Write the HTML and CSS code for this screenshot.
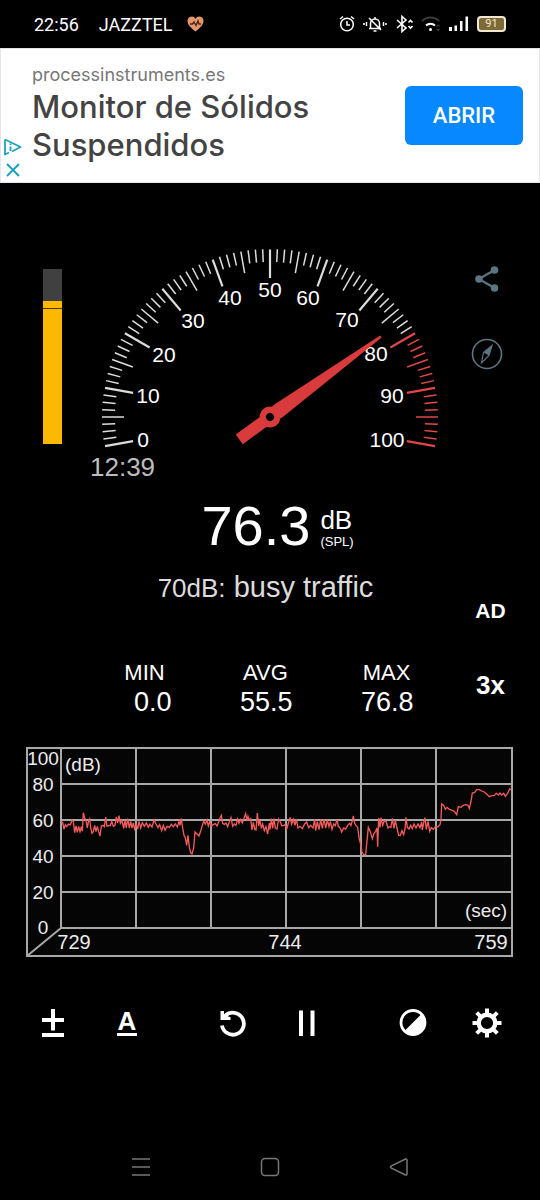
FILE: index.html
```html
<!DOCTYPE html>
<html lang="en">
<head>
  <meta charset="UTF-8">
  <meta name="viewport" content="width=device-width, initial-scale=1.0">
  <title>Sound Meter</title>
  <link rel="stylesheet" href="styles.css">
</head>
<body>
  <header class="status-bar">
    <span>22:56</span>
    <span class="carrier">JAZZTEL</span>
    <svg class="heart" width="17" height="16" viewBox="0 0 17 16">
      <path d="M8.5 15.5C4 12 .5 8.500.5 5A4.300 4.300 0 0 1 8.500 2.700 4.300 4.300 0 0 1 16.500 5C16.500 8.500 13 12 8.500 15.500Z" fill="#e2986c"/>
      <path d="M3 8h2.500l1.500-2 2 3.500 2-4.500 1 3h2" fill="none" stroke="#4a2412" stroke-width="1.400"/>
    </svg>
    <div class="status-icons">
      <!-- alarm -->
      <svg width="16" height="18" viewBox="0 0 16 18" fill="none" stroke="#fff" stroke-width="1.500">
        <circle cx="8" cy="9.500" r="6.300"/>
        <path d="M8 6v4h3M1 4l3-2.500M15 4l-3-2.500"/>
      </svg>
      <!-- muted bell -->
      <svg width="24" height="18" viewBox="0 0 24 18" fill="none" stroke="#fff" stroke-width="1.500">
        <path d="M6 13.500h12M7.500 13V8.500a4.500 4.500 0 0 1 9 0V13M12 2v2M10.500 16h3M6 3l12 12M3.500 7v4M1 8v2M20.500 7v4M23 8v2"/>
      </svg>
      <!-- bluetooth -->
      <svg width="18" height="18" viewBox="0 0 18 18" fill="none" stroke="#fff" stroke-width="1.600">
        <path d="M2 5l9 8-4 3.500v-15L11 5l-9 8"/>
        <path d="M13.500 7.500l2-2 2 2M13.500 11l2 2 2-2"/>
      </svg>
      <!-- wifi -->
      <svg width="20" height="18" viewBox="0 0 20 18" fill="none" stroke="#fff" stroke-width="2">
        <path d="M1 6a12 12 0 0 1 17 0" stroke="#3b3b3b"/>
        <path d="M5 10.500a7 7 0 0 1 9 0"/>
        <circle cx="9.500" cy="14.500" r="1.500" fill="#fff" stroke="none"/>
        <path d="M15.500 11.500l1.500-1.500 1.500 1.500M15.500 14l1.500 1.500 1.500-1.500" stroke="#3b3b3b" stroke-width="1.200"/>
      </svg>
      <!-- signal -->
      <svg width="20" height="18" viewBox="0 0 20 18" fill="#fff">
        <path d="M0 12h3v4H0zM5.500 10.500h2.500V16H5.500zM11 6h2.500v10H11zM16.500 1.500h2.500V16h-2.500z"/>
      </svg>
      <span class="battery">91</span>
    </div>
  </header>

  <section class="ad">
    <div class="ad-marks">
      <a href="#" aria-label="AdChoices">
        <svg width="18" height="18" viewBox="0 0 18 18" fill="none" stroke="#1ba4bd" stroke-width="1.800">
          <path d="M1 1.500l15.500 7.500-8.500 4.500M1 1.500v15l4-2" stroke-linejoin="round"/>
          <path d="M6.500 5.500v1.500M6.500 8.500v4.500"/>
        </svg>
      </a>
      <button type="button" aria-label="Close ad">
        <svg width="18" height="16" viewBox="0 0 18 16" fill="none" stroke="#1ba4bd" stroke-width="2">
          <path d="M3 2l12 12M15 2L3 14"/>
        </svg>
      </button>
    </div>
    <div class="ad-text">
      <a class="ad-url" href="#">processinstruments.es</a>
      <h2>Monitor de Sólidos Suspendidos</h2>
    </div>
    <button type="button" class="ad-open">ABRIR</button>
  </section>

  <main>
    <section class="meter">
      <div class="level">
        <div class="level-fill"><div class="level-line"></div></div>
      </div>

      <div class="gauge">
        <svg viewBox="-180 -177 360 214">
          <defs>
            <!-- one block of ten units: major tick, then one every 2.5 degrees -->
            <g id="ticks" stroke="currentColor" stroke-width="1.500">
              <path id="major" d="M-167.500 0h28.500" stroke-width="2.200"/>
              <path d="M-168 0h13" transform="rotate(2.500)"/>
              <path d="M-168 0h13" transform="rotate(5)"/>
              <path d="M-168 0h13" transform="rotate(7.500)"/>
              <path d="M-168 0h22" transform="rotate(10)"/>
              <path d="M-168 0h13" transform="rotate(12.500)"/>
              <path d="M-168 0h13" transform="rotate(15)"/>
              <path d="M-168 0h13" transform="rotate(17.500)"/>
            </g>
          </defs>
          <g class="scale">
            <use href="#ticks" transform="rotate(-10)"/>
            <use href="#ticks" transform="rotate(10)"/>
            <use href="#ticks" transform="rotate(30)"/>
            <use href="#ticks" transform="rotate(50)"/>
            <use href="#ticks" transform="rotate(70)"/>
            <use href="#ticks" transform="rotate(90)"/>
            <use href="#ticks" transform="rotate(110)"/>
            <use href="#ticks" transform="rotate(130)"/>
          </g>
          <g class="scale-loud">
            <use href="#ticks" transform="rotate(150)"/>
            <use href="#ticks" transform="rotate(170)"/>
            <use href="#major" transform="rotate(190)" stroke="currentColor"/>
          </g>
          <g class="scale-labels">
            <text x="-127" y="30">0</text>
            <text x="-122" y="-14">10</text>
            <text x="-106" y="-55">20</text>
            <text x="-77" y="-89">30</text>
            <text x="-40" y="-112">40</text>
            <text x="0" y="-120">50</text>
            <text x="38" y="-112">60</text>
            <text x="77" y="-90">70</text>
            <text x="106" y="-56">80</text>
            <text x="122" y="-14">90</text>
            <text x="117" y="30">100</text>
          </g>
          <g transform="rotate(-36)" fill="#d93b3c">
            <path d="M-38-6H0L10-7.500 137-1.300V1.300L10 7.500 0 6H-38Z"/>
            <circle r="10.500"/>
            <circle r="4" fill="#000"/>
          </g>
        </svg>
        <time>12:39</time>
      </div>

      <div class="meter-actions">
        <button type="button" aria-label="Share">
          <svg width="32" height="32" viewBox="0 0 32 32" fill="#5c7581">
            <path d="M23.500 7L8 16l15.500 9" fill="none" stroke="#5c7581" stroke-width="2.200"/>
            <circle cx="8" cy="16" r="3.800"/>
            <circle cx="23.500" cy="7" r="3.800"/>
            <circle cx="23.500" cy="25" r="3.800"/>
          </svg>
        </button>
        <button type="button" aria-label="Calibrate">
          <svg width="32" height="32" viewBox="0 0 32 32" fill="none" stroke="#5c7581" stroke-width="1.600">
            <circle cx="16" cy="16" r="14.500"/>
            <path d="M21 7.500L12.500 14.500 10.500 25l7.500-7.500Z" stroke-width="1.200"/>
            <path d="M21 7.500L12.500 14.500 18 17.500Z" fill="#5c7581" stroke="none"/>
          </svg>
        </button>
      </div>
    </section>

    <section class="info">
      <div class="readings">
        <div class="current">
          <span class="current-value">76.3</span>
          <span class="unit">dB<small>(SPL)</small></span>
        </div>
        <p class="description"><span>70dB:</span> busy traffic</p>
        <dl class="stats">
          <div><dt>MIN</dt><dd>0.0</dd></div>
          <div><dt>AVG</dt><dd>55.5</dd></div>
          <div><dt>MAX</dt><dd>76.8</dd></div>
        </dl>
      </div>
      <div class="side-buttons">
        <button type="button" class="remove-ads">AD</button>
        <button type="button" class="speed">3x</button>
      </div>
    </section>

    <svg class="chart" viewBox="0 0 487 210">
      <g class="grid">
        <rect x="1" y="1" width="485" height="208"/>
        <path d="M35 1v180M110 1v180M185 1v180M260 1v180M335 1v180M410 1v180"/>
        <path d="M35 37h451M35 73h451M35 109h451M35 145h451M35 181h451M35 181L1 209"/>
      </g>
      <svg x="35" y="1" width="450" height="180" viewBox="0 0 1350 540">
        <polyline class="trace" points="0,223 5,223 9,243 13,230 17,236 22,229 28,230 33,217 37,220 41,254 45,234 49,253 53,235 57,251 61,236 64,250 67,194 71,210 75,217 79,240 82,222 86,213 89,240 93,256 97,251 101,232 105,251 109,235 113,251 117,264 121,234 126,232 130,236 134,207 138,235 144,232 148,233 152,220 157,235 162,232 166,207 170,225 174,203 178,226 183,218 188,241 192,217 196,240 200,212 205,240 209,220 213,240 217,225 221,243 226,230 230,243 234,220 239,240 244,224 250,235 256,225 262,238 267,229 273,237 279,216 285,228 291,239 296,230 302,248 307,232 312,247 318,235 325,238 331,229 337,236 343,228 349,237 354,220 357,232 361,212 365,240 369,262 373,270 377,292 381,262 385,298 389,314 393,318 398,300 402,252 408,258 414,264 420,246 424,232 428,220 433,228 438,216 442,234 446,222 451,234 457,230 463,227 468,234 473,222 477,210 481,202 485,226 490,229 495,225 500,236 505,221 510,209 515,235 520,228 525,232 530,213 534,226 539,214 544,225 549,211 554,197 558,218 561,205 565,216 569,212 573,246 577,223 581,243 585,246 589,195 593,234 597,216 601,241 605,228 610,248 615,236 620,258 625,225 627,245 631,212 635,241 639,212 643,240 648,243 653,213 658,222 663,234 668,232 672,230 677,243 682,226 687,208 692,229 697,214 702,232 706,213 711,240 717,235 724,242 731,228 737,222 743,239 749,232 756,240 761,213 764,248 769,221 774,245 779,215 784,241 789,213 794,240 799,216 804,236 808,221 813,244 818,228 823,233 828,215 832,235 838,241 842,252 848,240 854,243 860,232 866,226 870,232 874,218 877,204 881,226 885,233 890,237 894,268 898,285 903,312 908,320 914,320 918,278 922,238 928,251 934,272 939,256 944,250 948,240 950,296 953,210 957,238 960,209 965,232 970,218 976,222 981,240 985,236 990,238 994,211 999,241 1003,217 1008,240 1013,262 1018,262 1023,248 1028,260 1032,243 1035,208 1039,238 1044,243 1049,232 1054,242 1059,228 1065,240 1071,228 1077,239 1082,222 1084,246 1089,220 1092,209 1096,244 1101,220 1106,250 1111,239 1117,244 1123,236 1130,237 1137,230 1140,214 1142,168 1148,172 1153,184 1158,178 1165,184 1172,186 1180,190 1187,200 1192,176 1200,178 1207,172 1214,170 1221,172 1225,181 1230,160 1234,135 1241,133 1247,125 1255,125 1262,129 1270,132 1277,138 1285,146 1292,143 1299,143 1306,136 1312,141 1317,135 1322,141 1328,136 1333,145 1340,136 1346,123 1350,125"/>
      </svg>
      <g class="axis">
        <text x="17" y="18">100</text>
        <text x="17" y="44">80</text>
        <text x="17" y="80">60</text>
        <text x="17" y="116">40</text>
        <text x="17" y="152">20</text>
        <text x="17" y="187">0</text>
        <text x="57" y="24">(dB)</text>
        <text x="460" y="170">(sec)</text>
      </g>
      <g class="axis axis-time">
        <text x="48" y="202">729</text>
        <text x="259" y="202">744</text>
        <text x="465" y="202">759</text>
      </g>
    </svg>

    <div class="toolbar">
      <div class="tool-group">
        <button type="button" aria-label="Adjust level">
          <svg viewBox="0 0 48 48" stroke="#fff" stroke-width="4">
            <path d="M24 10v21.500M13 21h22M13 36h22"/>
          </svg>
        </button>
        <button type="button" aria-label="Weighting A">
          <svg viewBox="0 0 48 48" fill="#fff">
            <text class="tool-letter" x="24" y="31">A</text>
            <path d="M14 34h20v3H14z"/>
          </svg>
        </button>
      </div>
      <div class="tool-group">
        <button type="button" aria-label="Reset">
          <svg viewBox="0 0 48 48" fill="#fff">
            <path d="M13 26.500A11 11 0 1 0 16.500 16.500" fill="none" stroke="#fff" stroke-width="3.800"/>
            <path d="M11.500 12h3.500v3.500l3-2 1 4 2.500.5v3h-10z"/>
          </svg>
        </button>
        <button type="button" aria-label="Pause">
          <svg viewBox="0 0 48 48" fill="#fff">
            <path d="M16 11.500h4V37h-4zM27.500 11.500h4V37h-4z"/>
          </svg>
        </button>
      </div>
      <div class="tool-group">
        <button type="button" aria-label="Theme">
          <svg viewBox="0 0 48 48" fill="#fff">
            <circle cx="24" cy="23.500" r="12" fill="none" stroke="#fff" stroke-width="2.800"/>
            <path d="M32.500 15A12 12 0 0 1 15.500 32Z"/>
          </svg>
        </button>
        <button type="button" aria-label="Settings">
          <svg viewBox="0 0 48 48" fill="none" stroke="#fff">
            <circle cx="24" cy="24" r="8.300" stroke-width="4.400"/>
            <path d="M24 9.500v5M24 33.500v5M9.500 24h5M33.500 24h5M13.700 13.700l3.500 3.500M30.800 30.800l3.500 3.500M13.700 34.300l3.500-3.500M30.800 17.200l3.500-3.500" stroke-width="4"/>
          </svg>
        </button>
      </div>
    </div>
  </main>

  <nav class="nav-bar">
    <button type="button" aria-label="Recent apps">
      <svg width="20" height="20" viewBox="0 0 20 20"><path d="M1 2h18M1 10h18M1 18h18"/></svg>
    </button>
    <button type="button" aria-label="Home">
      <svg width="20" height="20" viewBox="0 0 20 20"><rect x="1.500" y="1.500" width="17" height="17" rx="3.500"/></svg>
    </button>
    <button type="button" aria-label="Back">
      <svg width="20" height="20" viewBox="0 0 20 20"><path d="M2 9q-1 1 0 2l14.500 7q1.500.5 1.500-1V3q0-1.500-1.500-1Z"/></svg>
    </button>
  </nav>
</body>
</html>
```

FILE: styles.css
```css
:root {
  --color-background: #000;
  --color-text: #fff;
  --color-loud: #e04848;
  --color-level: #fdb900;
  --color-grid: #a8a8a8;
  --font-app: "Liberation Sans", Arial, sans-serif;
  --font-system: Roboto, "Noto Sans", sans-serif;
  --font-ad: Inter, Lato, sans-serif;
}

* {
  margin: 0;
  padding: 0;
  box-sizing: border-box;
}

body {
  font-family: var(--font-app);
  background-color: var(--color-background);
  color: var(--color-text);
  display: flex;
  flex-direction: column;
  min-height: 100vh;
}

button {
  background: none;
  border: none;
  color: inherit;
  font-family: inherit;
  cursor: pointer;
}

svg {
  display: block;
}

/* Status bar */
.status-bar {
  display: flex;
  align-items: center;
  height: 48px;
  padding: 0 34px;
  font-family: var(--font-system);
  font-size: 18px;
}

.carrier {
  margin-left: 20px;
}

.heart {
  margin-left: 14px;
}

.status-icons {
  display: flex;
  align-items: center;
  gap: 8px;
  margin-left: auto;
}

.battery {
  width: 29px;
  height: 16px;
  border: 2px solid #efe8d4;
  border-radius: 4px;
  background-color: #7d6a36;
  color: #f6eccb;
  font-size: 11px;
  line-height: 12px;
  text-align: center;
}

/* Ad banner */
.ad {
  display: flex;
  align-items: center;
  min-height: 135px;
  padding-right: 16px;
  background-color: #fff;
  border: 1px solid #e4e4ea;
  font-family: var(--font-ad);
}

.ad-marks {
  display: flex;
  flex-direction: column;
  align-self: flex-end;
  gap: 6px;
  width: 31px;
  padding: 0 0 4px 3px;
}

.ad-text {
  flex: 1;
  padding-bottom: 5px;
}

.ad-url {
  display: block;
  color: #777;
  font-size: 18px;
  line-height: 26px;
  text-decoration: none;
}

.ad h2 {
  max-width: 320px;
  color: #434343;
  font-size: 31px;
  font-weight: 500;
  line-height: 38px;
}

.ad-open {
  width: 118px;
  height: 59px;
  border-radius: 6px;
  background-color: #0788ff;
  color: #fff;
  font-family: var(--font-system);
  font-size: 22px;
  font-weight: 500;
}

/* Gauge */
.meter {
  display: grid;
  grid-template-columns: 90px 1fr 90px;
  padding-top: 57px;
}

.level {
  display: flex;
  align-items: flex-end;
  width: 19px;
  height: 175px;
  margin: 29px 0 0 43px;
  background-color: #404040;
}

.level-fill {
  width: 100%;
  height: 82%;
  padding-top: 7px;
  background-color: var(--color-level);
}

.level-line {
  height: 1px;
  background-color: #4a3800;
}

.gauge time {
  display: block;
  color: #bdbdbd;
  font-size: 26px;
  line-height: 26px;
}

.scale {
  color: #dcdcdc;
}

.scale-loud {
  color: var(--color-loud);
}

.scale-labels {
  fill: #fff;
  font-size: 21px;
  text-anchor: middle;
}

.meter-actions {
  display: flex;
  flex-direction: column;
  align-items: center;
  gap: 43px;
  padding: 23px 16px 0 0;
}

/* Readings */
.info {
  display: grid;
  grid-template-columns: 1fr 93px;
  padding-left: 84px;
}

.current {
  display: flex;
  align-items: flex-end;
  justify-content: center;
  gap: 10px;
  margin-top: 16px;
  padding-left: 24px;
}

.current-value {
  font-size: 56px;
  line-height: 60px;
}

.unit {
  display: flex;
  flex-direction: column;
  padding-bottom: 6px;
  font-size: 26px;
  line-height: 25px;
}

.unit small {
  font-size: 13px;
  line-height: 17px;
}

.description {
  margin-top: 16px;
  color: #dcdcdc;
  font-size: 29px;
  line-height: 30px;
  text-align: center;
}

.description span {
  font-size: 26px;
}

.stats {
  display: grid;
  grid-template-columns: repeat(3, 1fr);
  justify-items: center;
  margin-top: 56px;
}

.stats dt {
  font-size: 22px;
  line-height: 28px;
  text-align: center;
}

.stats dd {
  min-width: 54px;
  font-size: 27px;
  line-height: 30px;
  text-align: right;
}

.side-buttons {
  display: flex;
  flex-direction: column;
  align-items: center;
  justify-content: flex-end;
  gap: 34px;
  padding: 0 6px 12px 0;
}

.side-buttons button {
  width: 60px;
  height: 40px;
  font-weight: 700;
}

.remove-ads {
  font-size: 21px;
}

.speed {
  font-size: 26px;
}

/* Chart */
.chart {
  width: calc(100% - 53px);
  margin: 30px 27px 0 26px;
}

.grid {
  fill: #050505;
  stroke: var(--color-grid);
  stroke-width: 2;
}

.trace {
  fill: none;
  stroke: #f45b5b;
  stroke-width: 4;
}

.axis {
  fill: #ececec;
  font-size: 19px;
  text-anchor: middle;
}

.axis-time {
  font-size: 20px;
}

/* Toolbar */
.toolbar {
  display: flex;
  justify-content: space-between;
  margin-top: 42px;
  padding: 0 29px;
}

.tool-group {
  display: flex;
  gap: 26px;
}

.tool-group button {
  width: 48px;
  height: 48px;
}

.tool-letter {
  font-size: 26px;
  font-weight: 700;
  text-anchor: middle;
}

/* System navigation */
.nav-bar {
  display: grid;
  grid-template-columns: repeat(3, 1fr);
  justify-items: center;
  align-items: center;
  height: 66px;
  margin-top: auto;
  padding: 0 76px;
}

.nav-bar svg {
  fill: none;
  stroke: #777;
  stroke-width: 1.5;
}
```
